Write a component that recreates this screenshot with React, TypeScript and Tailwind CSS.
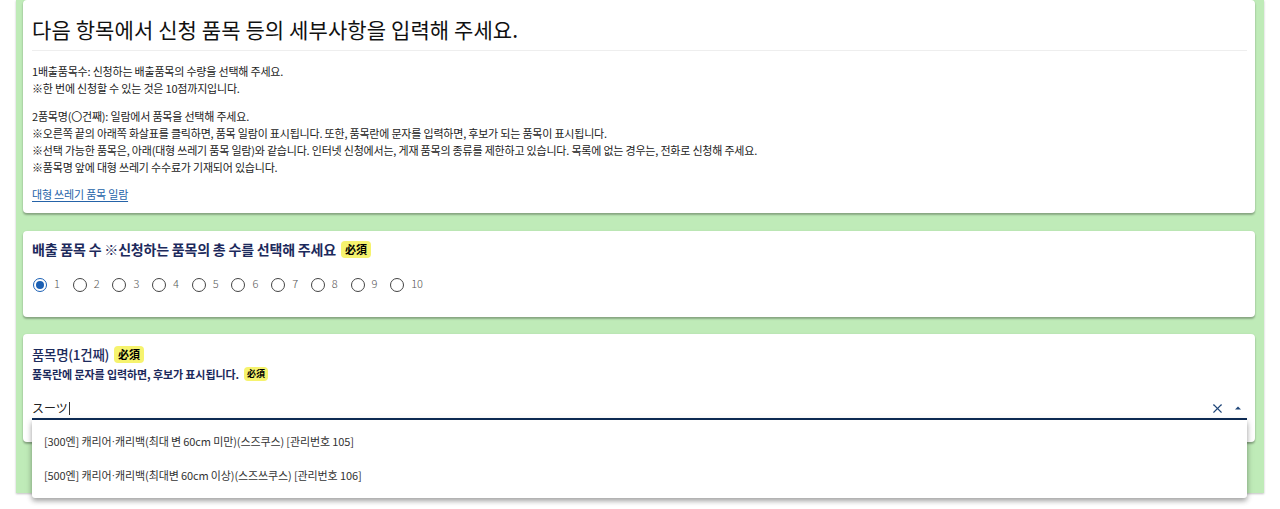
import { X } from "lucide-react";

const font = { fontFamily: '"Noto Sans CJK KR", "Noto Sans", sans-serif' };

function Badge({ small = false }: { small?: boolean }) {
  return (
    <span
      className={`inline-flex items-center rounded-[4px] bg-[#f6f36e] text-black font-bold ${
        small ? "h-[14px] px-[3px] text-[9px] ml-[5px]" : "h-[17px] px-[4px] text-[11px] ml-[5px]"
      }`}
      style={{ fontFamily: '"Noto Sans CJK JP", sans-serif' }}
    >
      必須
    </span>
  );
}

function Radio({ label, checked }: { label: string; checked?: boolean }) {
  return (
    <label className="flex items-center w-[39.7px] shrink-0">
      <span
        className={`flex items-center justify-center w-[14px] h-[14px] rounded-full border-[1.5px] ${
          checked ? "border-[#1a5fb4]" : "border-[#444]"
        }`}
      >
        {checked && <span className="w-[8px] h-[8px] rounded-full bg-[#1a5fb4]" />}
      </span>
      <span className="ml-[7px] text-[11px] text-[#555] font-light leading-none -mt-[3px]">{label}</span>
    </label>
  );
}

function Dot() {
  return <span style={{ fontFamily: '"Liberation Sans", sans-serif' }}>·</span>;
}

const cardCls =
  "bg-white rounded-[4px] shadow-[0_2px_2px_rgba(0,0,0,0.28),0_0_2px_rgba(0,0,0,0.08)]";

export default function App() {
  const nums = ["1", "2", "3", "4", "5", "6", "7", "8", "9", "10"];
  return (
    <div className="w-[1280px] h-[509px] overflow-hidden bg-white" style={font}>
      <div className="relative ml-[16px] w-[1248px] h-[493px] bg-[#bfebb8] pl-[7px] pr-[9px] shadow-[0_1px_2px_rgba(0,0,0,0.25)]">
        {/* card 1 */}
        <div className={`${cardCls} h-[213px] pl-[9px] pr-[8px] pt-[14px]`}>
          <h1 className="text-[21px] leading-[31px] text-[#111] font-normal tracking-[0.1px]">
            다음 항목에서 신청 품목 등의 세부사항을 입력해 주세요.
          </h1>
          <div className="mt-[5px] h-px bg-[#eeeeee]" />
          <div className="mt-[12px] text-[11px] leading-[17px] text-[#222] tracking-[-0.2px]">
            <p>1배출품목수: 신청하는 배출품목의 수량을 선택해 주세요.</p>
            <p>※한 번에 신청할 수 있는 것은 10점까지입니다.</p>
            <p className="mt-[11px]">2품목명(〇건째): 일람에서 품목을 선택해 주세요.</p>
            <p>※오른쪽 끝의 아래쪽 화살표를 클릭하면, 품목 일람이 표시됩니다. 또한, 품목란에 문자를 입력하면, 후보가 되는 품목이 표시됩니다.</p>
            <p>※선택 가능한 품목은, 아래(대형 쓰레기 품목 일람)와 같습니다. 인터넷 신청에서는, 게재 품목의 종류를 제한하고 있습니다. 목록에 없는 경우는, 전화로 신청해 주세요.</p>
            <p>※품목명 앞에 대형 쓰레기 수수료가 기재되어 있습니다.</p>
            <p className="mt-[10px]">
              <a className="text-[#2563a8] underline underline-offset-2">대형 쓰레기 품목 일람</a>
            </p>
          </div>
        </div>

        {/* card 2 */}
        <div className={`${cardCls} mt-[18px] h-[86px] pl-[9px] pr-[8px] pt-[9px]`}>
          <div className="flex items-center h-[18px]">
            <span className="text-[14px] font-bold text-[#1c2a5c] tracking-[-0.2px]">
              배출 품목 수 ※신청하는 품목의 총 수를 선택해 주세요
            </span>
            <Badge />
          </div>
          <div className="mt-[20px] flex items-center pl-[1px]">
            {nums.map((n, i) => (
              <Radio key={n} label={n} checked={i === 0} />
            ))}
          </div>
        </div>

        {/* card 3 */}
        <div className={`${cardCls} mt-[17px] h-[108px] pl-[9px] pr-[8px] pt-[11px]`}>
          <div className="flex items-center h-[18px]">
            <span className="text-[13.5px] font-medium text-[#1c2a5c] tracking-[-0.3px]">품목명(1건째)</span>
            <Badge />
          </div>
          <div className="mt-[3px] flex items-center h-[16px]">
            <span className="text-[11px] font-bold text-[#1c2a5c] tracking-[-0.1px]">
              품목란에 문자를 입력하면, 후보가 표시됩니다.
            </span>
            <Badge small />
          </div>
          <div className="mt-[16px] flex items-center h-[22px] border-b-2 border-[#0f2d57]">
            <span className="text-[12px] text-[#222]">スーツ</span>
            <span className="ml-[1px] w-px h-[13px] bg-[#333]" />
            <div className="ml-auto flex items-center gap-[8px] pr-[4px]">
              <X className="w-[15px] h-[15px] text-[#1f4679]" strokeWidth={1.8} />
              <svg width="10" height="10" viewBox="0 0 10 10" className="text-[#1f4679]">
                <path d="M2 6.5 L5 3.5 L8 6.5 Z" fill="currentColor" />
              </svg>
            </div>
          </div>
        </div>

        {/* dropdown */}
        <div className="absolute left-[16px] top-[420px] w-[1215px] h-[78px] bg-white rounded-b-[3px] shadow-[0_3px_5px_rgba(0,0,0,0.3),0_1px_8px_rgba(0,0,0,0.12)] pt-[4px]">
          <div className="h-[34px] flex items-center px-[12px] text-[11px] text-[#333] tracking-[-0.12px]">
            [300엔] 캐리어<Dot />캐리백(최대 변 60cm 미만)(스즈쿠스) [관리번호 105]
          </div>
          <div className="h-[34px] flex items-center px-[12px] text-[11px] text-[#333] tracking-[-0.12px]">
            [500엔] 캐리어<Dot />캐리백(최대변 60cm 이상)(스즈쓰쿠스) [관리번호 106]
          </div>
        </div>
      </div>
    </div>
  );
}
